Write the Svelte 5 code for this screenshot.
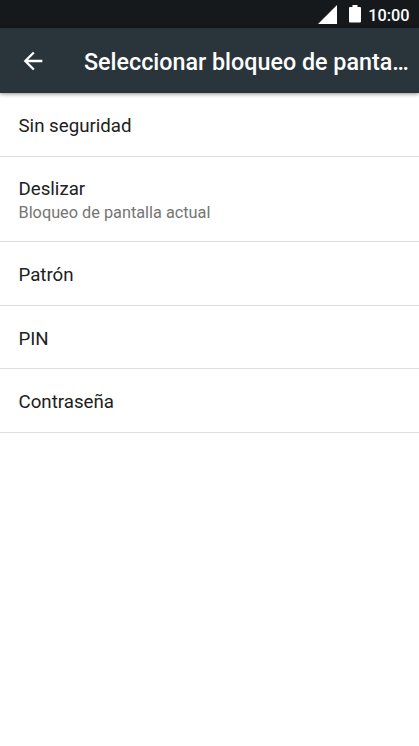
<script>
  const time = '10:00';
  const title = 'Seleccionar bloqueo de panta…';

  const options = [
    { name: 'Sin seguridad' },
    { name: 'Deslizar', summary: 'Bloqueo de pantalla actual' },
    { name: 'Patrón' },
    { name: 'PIN' },
    { name: 'Contraseña' }
  ];
</script>

<div class="screen">
  <div class="status-bar">
    <svg class="signal" viewBox="0 0 19 19" aria-hidden="true">
      <path d="M19 0v19H0z" />
    </svg>
    <svg class="battery" viewBox="0 0 12 18" aria-hidden="true">
      <path d="M3.5 0h5v2H11a1 1 0 0 1 1 1v13.5a1 1 0 0 1-1 1H1a1 1 0 0 1-1-1V3a1 1 0 0 1 1-1h2.5z" />
    </svg>
    <span class="time">{time}</span>
  </div>

  <header class="toolbar">
    <button class="back" aria-label="Atrás">
      <svg viewBox="0 0 24 24" aria-hidden="true">
        <path d="M20 11H7.83l5.59-5.59L12 4l-8 8 8 8 1.41-1.41L7.83 13H20v-2z" />
      </svg>
    </button>
    <h1>{title}</h1>
  </header>

  <ul class="options">
    {#each options as option}
      <li class="option" class:with-summary={option.summary}>
        <span class="name">{option.name}</span>
        {#if option.summary}
          <span class="summary">{option.summary}</span>
        {/if}
      </li>
    {/each}
  </ul>
</div>

<style>
  :global(body) {
    margin: 0;
    background-color: #fff;
  }

  .screen {
    display: flex;
    flex-direction: column;
    width: 100%;
    height: 746px;
    overflow: hidden;
    background-color: #fff;
    font-family: Roboto, sans-serif;
  }

  .status-bar {
    display: flex;
    align-items: center;
    justify-content: flex-end;
    box-sizing: border-box;
    height: 28px;
    padding-right: 9.5px;
    background-color: #15191c;
    color: #fff;
    flex-shrink: 0;
  }

  .status-bar svg {
    fill: #fff;
  }

  .signal {
    width: 19px;
    height: 19px;
    margin-right: 12px;
  }

  .battery {
    width: 12px;
    height: 18px;
    margin-right: 7px;
  }

  .time {
    font-size: 16.3px;
    font-weight: 500;
    line-height: 26px;
    padding-top: 3px;
  }

  .toolbar {
    display: flex;
    align-items: center;
    height: 65px;
    padding-left: 18.5px;
    background-color: #29343b;
    box-shadow: 0 1px 4px rgba(0, 0, 0, 0.45);
    color: #fff;
    flex-shrink: 0;
  }

  .back {
    display: flex;
    width: 28px;
    height: 28px;
    margin-right: 37.5px;
    padding: 0;
    border: none;
    background: none;
  }

  .back svg {
    width: 28px;
    height: 28px;
    fill: #fff;
  }

  h1 {
    margin: 0;
    padding-top: 2px;
    font-size: 23.3px;
    font-weight: 500;
    line-height: 28px;
    white-space: nowrap;
  }

  .options {
    margin: 0;
    padding: 0;
    list-style: none;
  }

  .option {
    display: flex;
    flex-direction: column;
    justify-content: center;
    box-sizing: border-box;
    height: 63.6px;
    padding: 3.1px 18.5px 0;
    border-bottom: 1px solid #dedede;
  }

  .option.with-summary {
    height: 85.6px;
    padding-top: 2.4px;
  }

  .name {
    font-size: 18.7px;
    line-height: 24px;
    color: #212121;
  }

  .summary {
    font-size: 16.3px;
    line-height: 23px;
    color: #757575;
  }
</style>
